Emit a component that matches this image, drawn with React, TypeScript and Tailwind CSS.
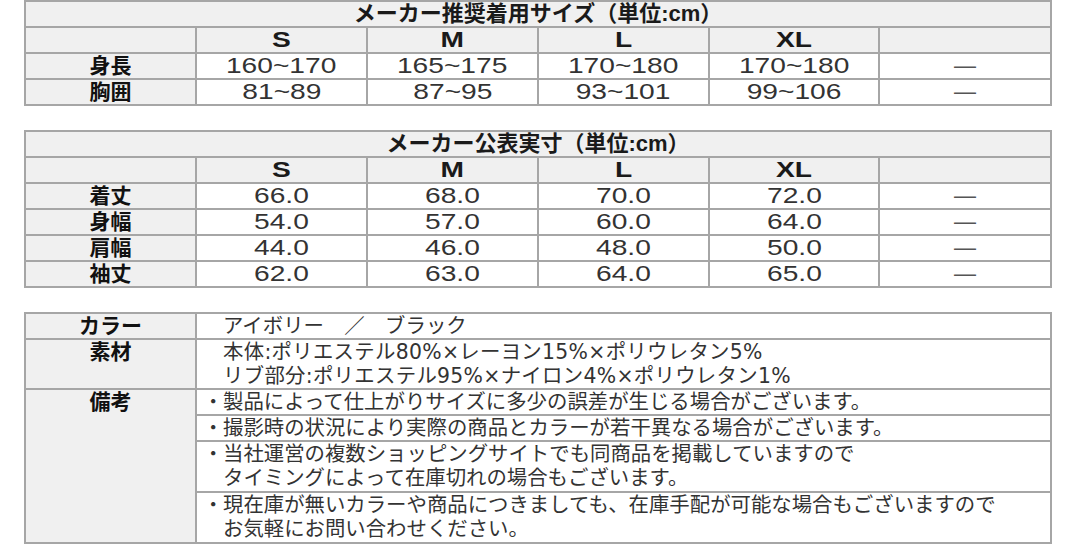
import type { JSX } from "react";

/* Size chart: two measurement tables + a product-notes table. */

const SIZES = ["S", "M", "L", "XL"];

const RECOMMENDED = [
  { label: "身長", values: ["160~170", "165~175", "170~180", "170~180"] },
  { label: "胸囲", values: ["81~89", "87~95", "93~101", "99~106"] },
];

const ACTUAL = [
  { label: "着丈", values: ["66.0", "68.0", "70.0", "72.0"] },
  { label: "身幅", values: ["54.0", "57.0", "60.0", "64.0"] },
  { label: "肩幅", values: ["44.0", "46.0", "48.0", "50.0"] },
  { label: "袖丈", values: ["62.0", "63.0", "64.0", "65.0"] },
];

const NOTES = [
  ["製品によって仕上がりサイズに多少の誤差が生じる場合がございます。"],
  ["撮影時の状況により実際の商品とカラーが若干異なる場合がございます。"],
  [
    "当社運営の複数ショッピングサイトでも同商品を掲載していますので",
    "タイミングによって在庫切れの場合もございます。",
  ],
  [
    "現在庫が無いカラーや商品につきましても、在庫手配が可能な場合もございますので",
    "お気軽にお問い合わせください。",
  ],
];

const cell = "border-2 border-[#a6a6a6] p-0";

const Wide = ({ children }: { children: string }): JSX.Element => (
  <span className="inline-block scale-x-[1.28]">{children}</span>
);

const SizeTable = ({
  title,
  rows,
}: {
  title: string;
  rows: { label: string; values: string[] }[];
}): JSX.Element => (
  <table className="w-[1026px] table-fixed border-collapse">
    <colgroup>
      <col className="w-[171px]" />
      <col className="w-[171px]" />
      <col className="w-[171px]" />
      <col className="w-[171px]" />
      <col className="w-[170px]" />
      <col className="w-[172px]" />
    </colgroup>
    <tbody>
      <tr className="h-[26px] bg-[#f0f0f0]">
        <td
          colSpan={6}
          className={`${cell} text-center text-[22px] font-bold leading-[22px] text-[#1a1a1a]`}
        >
          {title}
        </td>
      </tr>
      <tr className="h-[26px] bg-[#f0f0f0]">
        <td className={cell} />
        {SIZES.map((s) => (
          <td
            key={s}
            className={`${cell} text-center text-[22px] font-bold leading-[22px] text-[#1a1a1a]`}
          >
            <Wide>{s}</Wide>
          </td>
        ))}
        <td className={cell} />
      </tr>
      {rows.map((r) => (
        <tr key={r.label} className="h-[26px]">
          <td
            className={`${cell} bg-[#f0f0f0] text-center text-[21px] font-bold leading-[22px] text-[#111]`}
          >
            {r.label}
          </td>
          {r.values.map((v, i) => (
            <td
              key={i}
              className={`${cell} bg-white text-center text-[22px] leading-[22px] text-[#333]`}
            >
              <Wide>{v}</Wide>
            </td>
          ))}
          <td
            className={`${cell} bg-white text-center text-[22px] leading-[22px] text-[#555]`}
          >
            —
          </td>
        </tr>
      ))}
    </tbody>
  </table>
);

const label = `${cell} bg-[#f0f0f0] text-center align-top text-[21px] font-bold leading-[24px] text-[#111] [font-family:'Liberation_Sans','Noto_Sans_CJK_JP',sans-serif]`;
const body = `${cell} align-top text-[20.4px] leading-[24px] text-[#333] [font-family:'DejaVu_Sans','Noto_Sans_CJK_JP',sans-serif]`;

export default function App(): JSX.Element {
  return (
    <div className="h-[547px] w-[1080px] overflow-hidden bg-white [font-family:'Liberation_Sans','Noto_Sans_CJK_JP',sans-serif]">
      <div className="flex flex-col gap-[24px] pl-[24px] pt-0">
        <SizeTable title="メーカー推奨着用サイズ（単位:cm）" rows={RECOMMENDED} />
        <SizeTable title="メーカー公表実寸（単位:cm）" rows={ACTUAL} />

        <table className="w-[1026px] table-fixed border-collapse">
          <colgroup>
            <col className="w-[171px]" />
            <col className="w-[855px]" />
          </colgroup>
          <tbody>
            <tr className="h-[26px]">
              <td className={label}>カラー</td>
              <td className={`${body} pl-[26px]`}>アイボリー　／　ブラック</td>
            </tr>
            <tr className="h-[50px]">
              <td className={label}>素材</td>
              <td className={`${body} pl-[26px] tracking-[0.3px]`}>
                <div>本体:ポリエステル80%×レーヨン15%×ポリウレタン5%</div>
                <div>リブ部分:ポリエステル95%×ナイロン4%×ポリウレタン1%</div>
              </td>
            </tr>
            {NOTES.map((lines, i) => (
              <tr key={i} className={lines.length > 1 ? "h-[51px]" : "h-[25px]"}>
                {i === 0 && (
                  <td rowSpan={NOTES.length} className={label}>
                    備考
                  </td>
                )}
                <td className={`${body} pl-[6px]`}>
                  {lines.map((line, j) => (
                    <div key={j} className="flex">
                      <span className="w-[20px] shrink-0 text-center">
                        {j === 0 ? "・" : ""}
                      </span>
                      <span>{line}</span>
                    </div>
                  ))}
                </td>
              </tr>
            ))}
          </tbody>
        </table>
      </div>
      <div className="mt-[4px] h-[2px] w-full bg-[#dcdcdc]" />
    </div>
  );
}
